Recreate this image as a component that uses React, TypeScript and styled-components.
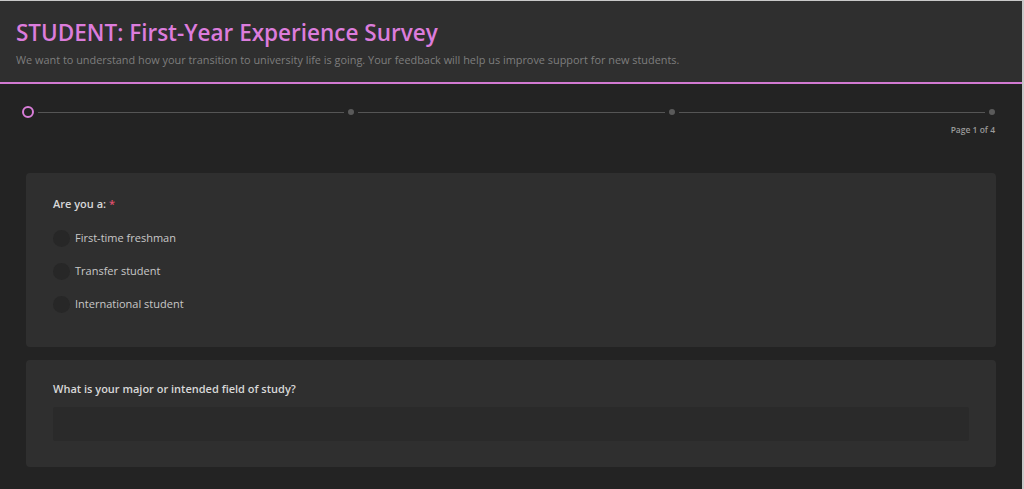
import React from "react";
import styled, { createGlobalStyle } from "styled-components";

const Global = createGlobalStyle`
  html, body { margin: 0; padding: 0; background: #c9c9c9; }
  body { font-family: "Open Sans", "Liberation Sans", sans-serif; }
  * { box-sizing: border-box; }
`;

const Page = styled.div`
  margin-top: 1px;
  width: calc(100% - 2px);
  min-height: 488px;
  background: #232323;
`;

const Header = styled.header`
  background: #2f2f2f;
  border-bottom: 2px solid #d27ad2;
  padding: 17px 16px 15px;
`;

const Title = styled.h1`
  margin: 0;
  font-size: 22.5px;
  font-weight: 600;
  line-height: 30px;
  color: #dc7cdc;
`;

const Subtitle = styled.p`
  margin: 4px 0 0;
  font-size: 10.9px;
  line-height: 15px;
  color: #7e7e7e;
`;

const Progress = styled.div`
  padding: 22px 27px 0 22px;
`;

const Track = styled.div`
  display: flex;
  align-items: center;
  height: 12px;
`;

const Node = styled.span<{ $active?: boolean }>`
  flex: none;
  border-radius: 50%;
  ${(p) =>
    p.$active
      ? `width: 12px; height: 12px; border: 2.5px solid #d87dd8; background: transparent;`
      : `width: 6px; height: 6px; background: #5a5a5a;`}
`;

const Line = styled.span`
  flex: 1;
  height: 1px;
  background: #555;
  margin: 0 4px;
`;

const PageLabel = styled.div`
  text-align: right;
  font-size: 8.5px;
  font-weight: 600;
  color: #9a9a9a;
  margin-top: 6px;
  line-height: 12px;
`;

const Cards = styled.div`
  display: flex;
  flex-direction: column;
  gap: 13px;
  padding: 37px 26px 20px;
`;

const Card = styled.section<{ $tight?: boolean }>`
  background: #2f2f2f;
  border-radius: 4px;
  padding: ${(p) => (p.$tight ? "21px 27px 26px" : "23px 27px 34px")};
`;

const Label = styled.div`
  font-size: 11px;
  font-weight: 600;
  color: #d8d8d8;
  line-height: 16px;
`;

const Req = styled.span`
  color: #e0506e;
  margin-left: 3px;
`;

const Options = styled.div`
  display: flex;
  flex-direction: column;
  gap: 15px;
  margin-top: 17px;
`;

const Option = styled.label`
  display: flex;
  align-items: center;
  gap: 5px;
  font-size: 11px;
  color: #c8c8c8;
  line-height: 18px;
`;

const Radio = styled.span`
  width: 17px;
  height: 17px;
  border-radius: 50%;
  background: #272727;
  flex: none;
`;

const Input = styled.div`
  margin-top: 10px;
  height: 34px;
  background: #2a2a2a;
  border-radius: 2px;
`;

const options = ["First-time freshman", "Transfer student", "International student"];

export default function App() {
  return (
    <>
      <Global />
      <Page>
        <Header>
          <Title>STUDENT: First-Year Experience Survey</Title>
          <Subtitle>
            We want to understand how your transition to university life is going. Your feedback will help us improve support for new students.
          </Subtitle>
        </Header>
        <Progress>
          <Track>
            <Node $active />
            <Line />
            <Node />
            <Line />
            <Node />
            <Line />
            <Node />
          </Track>
          <PageLabel>Page 1 of 4</PageLabel>
        </Progress>
        <Cards>
          <Card>
            <Label>
              Are you a:<Req>*</Req>
            </Label>
            <Options>
              {options.map((o) => (
                <Option key={o}>
                  <Radio />
                  {o}
                </Option>
              ))}
            </Options>
          </Card>
          <Card $tight>
            <Label>What is your major or intended field of study?</Label>
            <Input />
          </Card>
        </Cards>
      </Page>
    </>
  );
}
